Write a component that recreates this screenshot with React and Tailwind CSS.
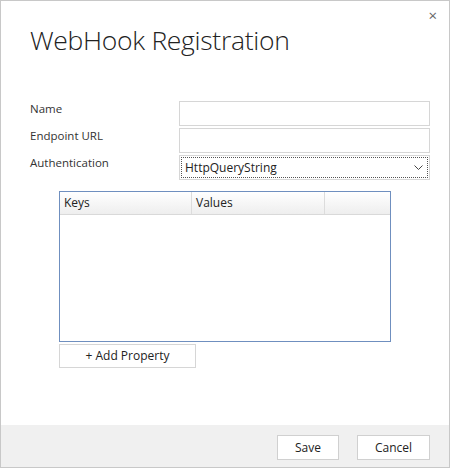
export default function App() {
  return (
    <div
      className="w-[450px] h-[468px] bg-white border border-[#c8c8c8] flex flex-col text-[#333] font-['Open_Sans',sans-serif]"
    >
      <div className="flex-1 relative">
        <button className="absolute right-[12px] top-[7px] text-[#666] text-[15px] leading-none">×</button>
        <h1 className="pl-[29px] pt-[21px] text-[26.5px] font-light tracking-[-0.3px] text-[#222] leading-[36px]">
          WebHook Registration
        </h1>

        <div className="mt-[43px] pl-[29px] pr-[19px] flex flex-col gap-[2px]">
          <div className="flex items-start h-[25px]">
            <label className="w-[149px] text-[11.5px] leading-[16px]">Name</label>
            <input className="flex-1 h-[25px] border border-[#d6d6d6]" />
          </div>
          <div className="flex items-start h-[25px]">
            <label className="w-[149px] text-[11.5px] leading-[16px]">Endpoint URL</label>
            <input className="flex-1 h-[25px] border border-[#d6d6d6]" />
          </div>
          <div className="flex items-start h-[25px]">
            <label className="w-[149px] text-[11.5px] leading-[16px]">Authentication</label>
            <div className="flex-1 h-[25px] border border-[#d6d6d6] p-[1px]">
              <div className="h-full border border-dotted border-[#555] flex items-center justify-between pl-[3px] pr-[4px]">
                <span className="text-[12px] text-[#222]">HttpQueryString</span>
                <svg width="9" height="5" viewBox="0 0 9 5" fill="none" stroke="#444" strokeWidth="1">
                  <path d="M0.5 0.5l4 4 4-4" />
                </svg>
              </div>
            </div>
          </div>
        </div>

        <div className="ml-[58px] mt-[11px] w-[332px] h-[151px] border border-[#6f8fbf] flex flex-col">
          <div className="h-[23px] flex border-b border-[#d9d9d9] bg-gradient-to-b from-white to-[#eeeeee] text-[12px] text-[#222]">
            <div className="w-[132px] border-r border-[#dcdcdc] pl-[4px] flex items-center">Keys</div>
            <div className="w-[133px] border-r border-[#dcdcdc] pl-[4px] flex items-center">Values</div>
            <div className="flex-1"></div>
          </div>
        </div>

        <button className="ml-[58px] mt-[1px] w-[137px] h-[24px] border border-[#d6d6d6] bg-white text-[12px] text-[#222]">
          + Add Property
        </button>
      </div>

      <div className="h-[42px] bg-[#f0f0f0] flex items-start justify-end gap-[18px] pr-[19px] pt-[10px]">
        <button className="w-[62px] h-[25px] border border-[#d0d0d0] bg-white text-[12px] text-[#222]">Save</button>
        <button className="w-[73px] h-[25px] border border-[#d0d0d0] bg-white text-[12px] text-[#222]">Cancel</button>
      </div>
    </div>
  );
}
